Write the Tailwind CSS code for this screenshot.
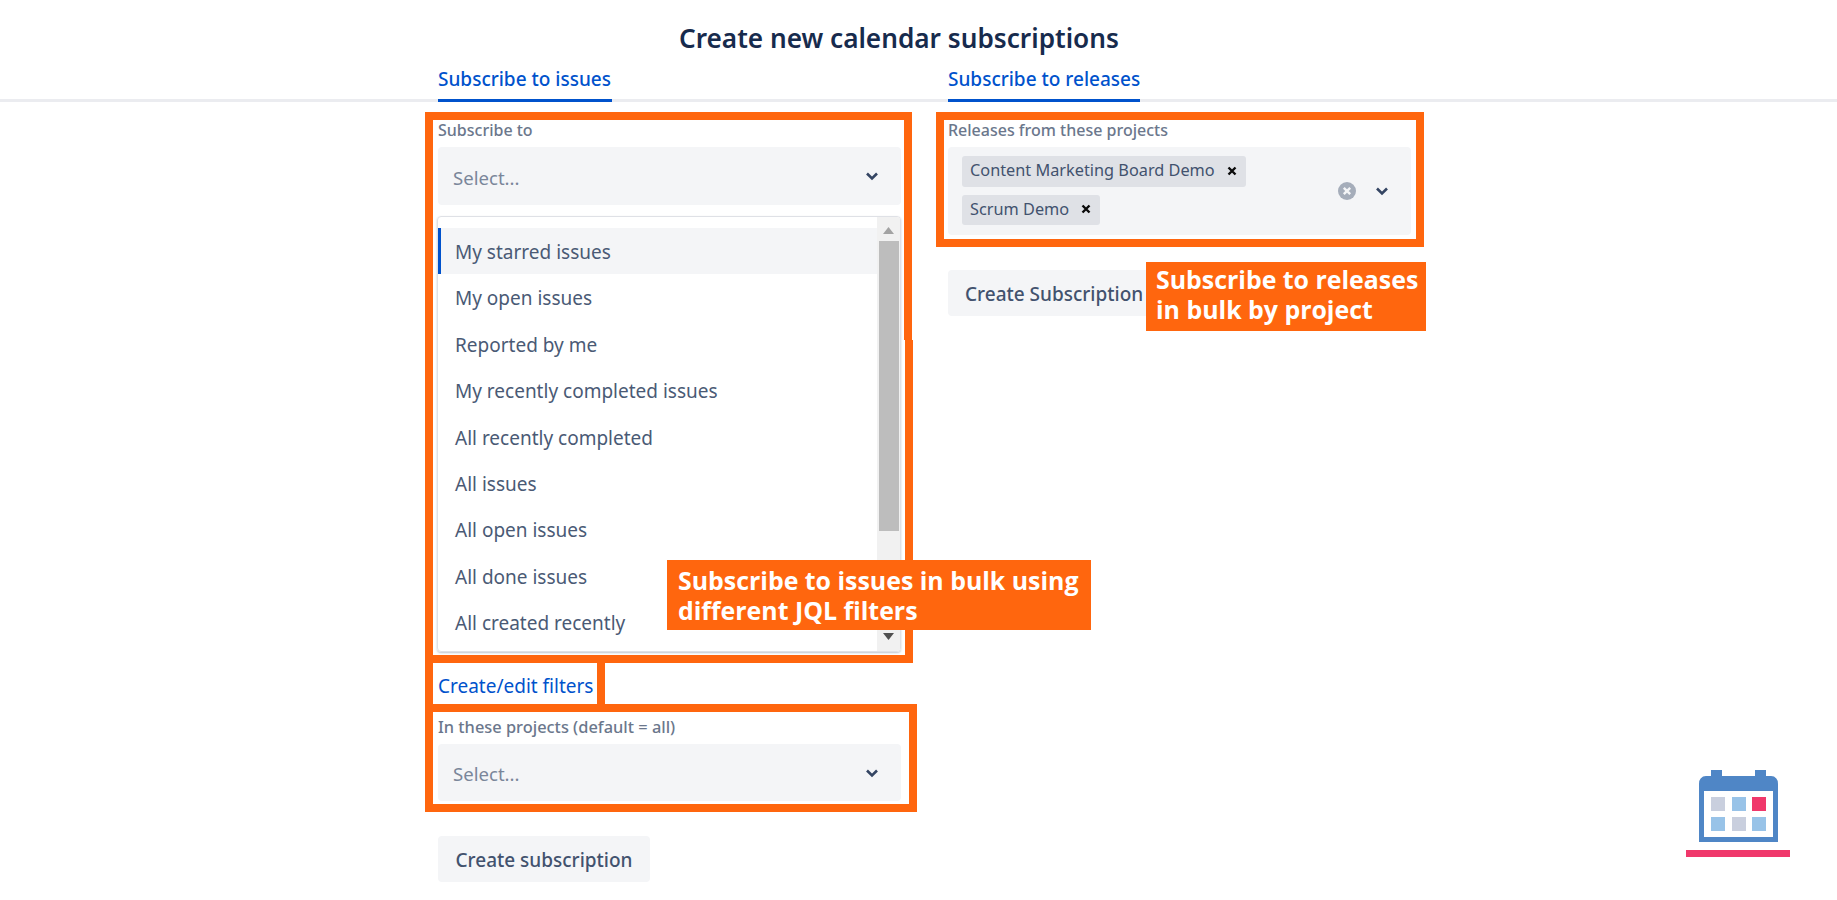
<!DOCTYPE html>
<html lang="en">
<head>
    <meta charset="UTF-8">
    <title>Create new calendar subscriptions</title>
    <script src="https://cdn.jsdelivr.net/npm/@tailwindcss/browser@4"></script>
</head>
<body class="bg-white font-['Noto_Sans',sans-serif] overflow-hidden">
<div class="relative h-[900px] w-[1837px]">

    <!-- Heading -->
    <div class="h-[55px] pt-[20px] pl-[679px]">
        <h1 class="text-[26.2px] leading-[36px] font-semibold whitespace-nowrap text-[#172b4d]">Create new calendar subscriptions</h1>
    </div>

    <!-- Tabs -->
    <div class="flex h-[47px] border-b-[3px] border-[#ebecf0] pl-[438px]">
        <a class="h-[47px] w-[174px] border-b-[3px] border-[#0052cc] pt-[10px] text-[19px] leading-[28px] font-medium whitespace-nowrap text-[#0052cc]">Subscribe to issues</a>
        <a class="ml-[336px] h-[47px] w-[192px] border-b-[3px] border-[#0052cc] pt-[10px] text-[19px] leading-[28px] font-medium whitespace-nowrap text-[#0052cc]">Subscribe to releases</a>
    </div>

    <div class="flex pl-[438px]">
        <!-- Issues column -->
        <div class="w-[463px]">
            <label class="mt-[18px] block h-[20px] text-[16px] leading-[20px] font-medium text-[#6b778c]">Subscribe to</label>
            <div class="mt-[7px] flex h-[58px] items-center justify-between rounded bg-[#f4f5f7] pr-[22px] pl-[15px]">
                <span class="pt-[3px] text-[18.6px] text-[#7a869a]">Select...</span>
                <svg width="14" height="10" viewBox="0 0 14 10" fill="none"><path d="M2 2.5 7 7.5 12 2.5" stroke="#344563" stroke-width="2.6"/></svg>
            </div>

            <!-- Filter list -->
            <div class="mt-[11px] -ml-[1px] flex h-[436px] overflow-hidden rounded border border-[#dfe1e6] shadow-[0_1px_2px_rgba(9,30,66,0.25)]">
                <ul class="flex-1 pt-[11px] text-[19px] text-[#4a5a75]">
                    <li class="flex h-[46.4px] items-center border-l-[3px] border-[#0052cc] bg-[#f4f5f7] pt-[2px] pl-[14px]">My starred issues</li>
                    <li class="flex h-[46.4px] items-center pt-[2px] pl-[17px]">My open issues</li>
                    <li class="flex h-[46.4px] items-center pt-[2px] pl-[17px]">Reported by me</li>
                    <li class="flex h-[46.4px] items-center pt-[2px] pl-[17px]">My recently completed issues</li>
                    <li class="flex h-[46.4px] items-center pt-[2px] pl-[17px]">All recently completed</li>
                    <li class="flex h-[46.4px] items-center pt-[2px] pl-[17px]">All issues</li>
                    <li class="flex h-[46.4px] items-center pt-[2px] pl-[17px]">All open issues</li>
                    <li class="flex h-[46.4px] items-center pt-[2px] pl-[17px]">All done issues</li>
                    <li class="flex h-[46.4px] items-center pt-[2px] pl-[17px]">All created recently</li>
                </ul>
                <div class="flex w-[23px] flex-col items-center bg-[#f1f1f1]">
                    <svg class="mt-[10px] mb-[7px] shrink-0" width="11" height="7" viewBox="0 0 11 7"><path d="M5.5 0 11 7H0Z" fill="#a3a3a3"/></svg>
                    <div class="h-[290px] w-[20px] shrink-0 bg-[#bdbdbd]"></div>
                    <svg class="mt-auto mb-[11px] shrink-0" width="11" height="7" viewBox="0 0 11 7"><path d="M0 0H11L5.5 7Z" fill="#505050"/></svg>
                </div>
            </div>

            <a class="mt-[22px] block h-[24px] text-[19px] leading-[24px] whitespace-nowrap text-[#0052cc]">Create/edit filters</a>

            <label class="mt-[19px] block h-[20px] text-[16.4px] leading-[20px] font-medium whitespace-nowrap text-[#6b778c]">In these projects (default = all)</label>
            <div class="mt-[7px] flex h-[57px] items-center justify-between rounded bg-[#f4f5f7] pr-[22px] pl-[15px]">
                <span class="pt-[3px] text-[18.6px] text-[#7a869a]">Select...</span>
                <svg width="14" height="10" viewBox="0 0 14 10" fill="none"><path d="M2 2.5 7 7.5 12 2.5" stroke="#344563" stroke-width="2.6"/></svg>
            </div>

            <button class="mt-[35px] h-[46px] w-[212px] rounded bg-[#f4f5f7] pt-[2px] text-center text-[19px] font-medium text-[#42526e]">Create subscription</button>
        </div>

        <!-- Releases column -->
        <div class="ml-[47px] w-[463px]">
            <label class="mt-[18px] block h-[20px] text-[16px] leading-[20px] font-medium whitespace-nowrap text-[#6b778c]">Releases from these projects</label>
            <div class="mt-[7px] flex h-[88px] items-center rounded bg-[#f4f5f7] pr-[22px] pl-[14px]">
                <div class="-mt-[2px] flex-1">
                    <div class="flex h-[31px] w-[284px] items-center justify-between rounded-[3px] bg-[#dfe1e6] pr-[9px] pb-[1px] pl-[8px] text-[16.3px] whitespace-nowrap text-[#42526e]">
                        Content Marketing Board Demo
                        <svg width="10" height="10" viewBox="0 0 10 10"><path d="M1.5 1.5 8.5 8.5M8.5 1.5 1.5 8.5" stroke="#0b0b0b" stroke-width="2.4"/></svg>
                    </div>
                    <div class="mt-[8px] flex h-[30px] w-[138px] items-center justify-between rounded-[3px] bg-[#dfe1e6] pr-[9px] pb-[1px] pl-[8px] text-[16.3px] whitespace-nowrap text-[#42526e]">
                        Scrum Demo
                        <svg width="10" height="10" viewBox="0 0 10 10"><path d="M1.5 1.5 8.5 8.5M8.5 1.5 1.5 8.5" stroke="#0b0b0b" stroke-width="2.4"/></svg>
                    </div>
                </div>
                <svg class="mr-[19px]" width="18" height="18" viewBox="0 0 18 18"><circle cx="9" cy="9" r="9" fill="#a5adba"/><path d="M5.8 5.8 12.2 12.2M12.2 5.8 5.8 12.2" stroke="#f4f5f7" stroke-width="2.4"/></svg>
                <svg width="14" height="10" viewBox="0 0 14 10" fill="none"><path d="M2 2.5 7 7.5 12 2.5" stroke="#344563" stroke-width="2.6"/></svg>
            </div>
            <button class="mt-[35px] h-[46px] w-[216px] rounded bg-[#f4f5f7] pt-[2px] pl-[17px] text-left text-[19px] font-medium whitespace-nowrap text-[#42526e]">Create Subscription</button>
        </div>
    </div>

    <!-- Orange annotation frames -->
    <div class="absolute top-[112px] left-[425px] h-[228px] w-[487px] border-[8px] border-b-0 border-[#ff660e]"></div>
    <div class="absolute top-[340px] left-[425px] h-[323px] w-[488px] border-[8px] border-t-0 border-[#ff660e]"></div>
    <div class="absolute top-[663px] left-[425px] h-[42px] w-[180px] border-x-[8px] border-[#ff660e]"></div>
    <div class="absolute top-[704px] left-[425px] h-[108px] w-[492px] border-[8px] border-[#ff660e]"></div>
    <div class="absolute top-[112px] left-[936px] h-[135px] w-[488px] border-[8px] border-[#ff660e]"></div>

    <!-- Orange callouts -->
    <div class="absolute top-[560px] left-[667px] h-[70px] w-[424px] bg-[#ff660e] pt-[6px] pl-[11px] font-['Open_Sans',sans-serif] text-[24.9px] leading-[29.5px] font-bold whitespace-nowrap text-white">Subscribe to issues in bulk using<br>different JQL filters</div>
    <div class="absolute top-[262px] left-[1146px] h-[69px] w-[280px] bg-[#ff660e] pt-[2px] pl-[10px] font-['Open_Sans',sans-serif] text-[24.9px] leading-[30px] font-bold whitespace-nowrap text-white">Subscribe to releases<br>in bulk by project</div>

    <!-- Calendar logo -->
    <svg class="absolute top-[770px] left-[1686px]" width="104" height="87" viewBox="0 0 104 87">
        <rect x="25" y="0" width="11" height="8" fill="#4f86c6"/>
        <rect x="69" y="0" width="11" height="8" fill="#4f86c6"/>
        <path d="M13 14a7 7 0 0 1 7-8H85a7 7 0 0 1 7 8V72H13Z" fill="#4f86c6"/>
        <rect x="18" y="21" width="69" height="46" fill="#fff"/>
        <rect x="25" y="27" width="14" height="14" fill="#c9cfde"/>
        <rect x="46" y="27" width="14" height="14" fill="#98c3e8"/>
        <rect x="66" y="27" width="14" height="14" fill="#f0386b"/>
        <rect x="25" y="47" width="14" height="14" fill="#98c3e8"/>
        <rect x="46" y="47" width="14" height="14" fill="#c9cfde"/>
        <rect x="66" y="47" width="14" height="14" fill="#98c3e8"/>
        <rect x="0" y="80" width="104" height="7" fill="#f0386b"/>
    </svg>
</div>
</body>
</html>
